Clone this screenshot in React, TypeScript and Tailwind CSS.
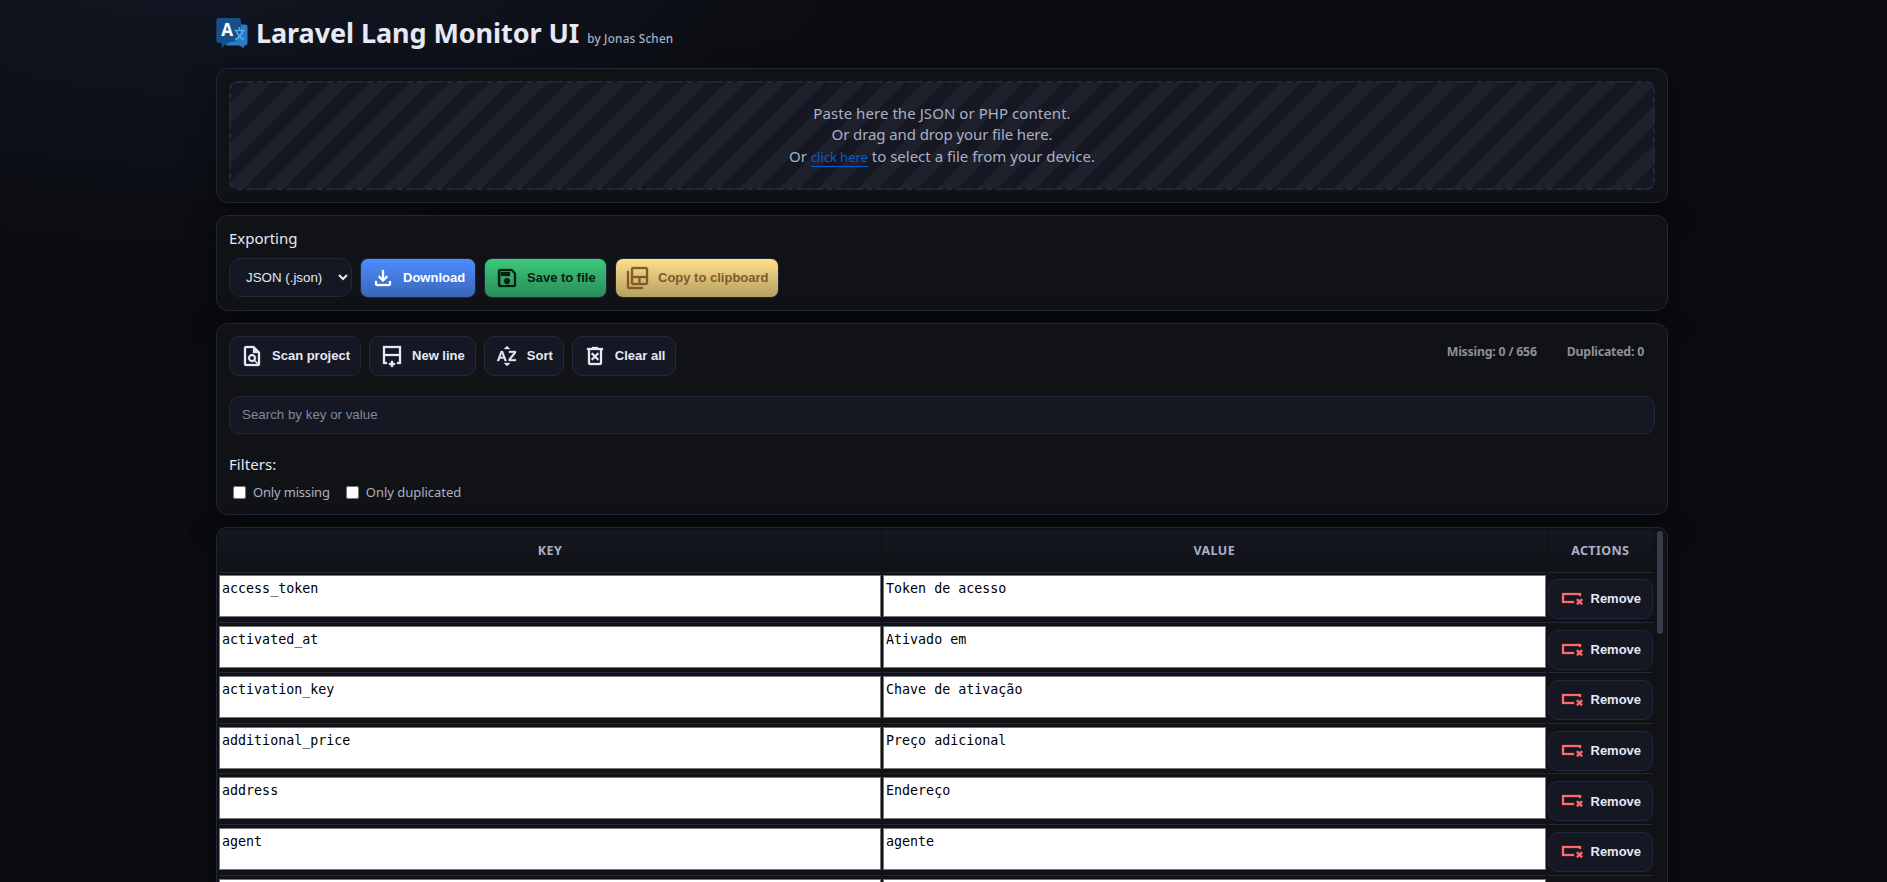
import type { ReactNode } from "react";

const card =
  "rounded-xl border border-[#22273a] bg-[#111216] shadow-[0_10px_30px_rgba(0,0,0,0.35)]";

function Symbol({ d, className = "" }: { d: string; className?: string }) {
  return (
    <svg
      viewBox="0 -960 960 960"
      className={"size-6 shrink-0 fill-current stroke-current stroke-[12] " + className}
    >
      <path d={d} />
    </svg>
  );
}

const icons = {
  download:
    "M480-320 280-520l56-58 104 104v-326h80v326l104-104 56 58-200 200ZM240-160q-33 0-56.500-23.500T160-240v-120h80v120h480v-120h80v120q0 33-23.500 56.500T720-160H240Z",
  save: "M840-680v480q0 33-23.500 56.500T760-120H200q-33 0-56.500-23.500T120-200v-560q0-33 23.500-56.500T200-840h480l160 160Zm-80 34L646-760H200v560h560v-446ZM480-240q50 0 85-35t35-85q0-50-35-85t-85-35q-50 0-85 35t-35 85q0 50 35 85t85 35ZM240-560h360v-160H240v160Zm-40-86v446-560 114Z",
  copy: "M120-40q-33 0-56.500-23.500T40-120v-640h80v640h560v80H120Zm160-160q-33 0-56.500-23.500T200-280v-560q0-33 23.500-56.500T280-920h520q33 0 56.500 23.500T880-840v560q0 33-23.500 56.500T800-200H280Zm0-360h520v-280H280v280Zm300 280h220v-200H580v200Zm-300 0h220v-200H280v200Z",
  scan: "M240-80q-33 0-56.500-23.500T160-160v-640q0-33 23.500-56.500T240-880h320l240 240v480q0 33-23.500 56.500T720-80H240Zm0-80h442L573-269q-21 14-44.500 21.500T480-240q-66 0-113-47t-47-113q0-66 47-113t113-47q66 0 113 47t47 113q0 25-7.500 48.500T611-307l109 109v-402H520v-200H240v640Zm240-160q33 0 56.500-23.500T560-400q0-33-23.500-56.500T480-480q-33 0-56.500 23.500T400-400q0 33 23.500 56.500T480-320Z",
  line: "M200-560h560v-240H200v240Zm-80 400v-720h720v720H680v-80h80v-240H200v240h80v80H120Zm320 120v-80h-80v-80h80v-80h80v80h80v80h-80v80h-80Z",
  sort: "m80-280 150-400h86l150 400h-82l-34-96H196l-32 96H80Zm140-164h104l-48-150h-6l-50 150Zm328 164v-76l202-252H556v-72h282v76L638-352h202v72H548ZM360-760l120-120 120 120H360ZM480-80 360-200h240L480-80Z",
  clear:
    "m376-300 104-104 104 104 56-56-104-104 104-104-56-56-104 104-104-104-56 56 104 104-104 104 56 56Zm-96 180q-33 0-56.500-23.500T200-200v-520h-40v-80h200v-40h240v40h200v80h-40v520q0 33-23.500 56.500T680-120H280Zm400-600H280v520h400v-520Z",
  remove:
    "M120-320v-400h760v120h-80v-40H200v240h400v80H120Zm566 20 64 64 70-70 70 70 64-64-70-70 70-70-64-64-70 70-70-70-64 64 70 70-70 70Z",
};

function ToolButton({ icon, children }: { icon: string; children: ReactNode }) {
  return (
    <button className="flex h-10 items-center gap-2 rounded-[10px] border border-[#22273a] bg-[#151722] px-2.5 font-['Liberation_Sans',sans-serif] text-[13px] font-bold text-[#e6e8f5]">
      <Symbol d={icon} />
      {children}
    </button>
  );
}

function Logo() {
  return (
    <svg viewBox="0 0 32 32" className="size-8 shrink-0">
      <path
        d="M13 6.500H29a2.500 2.500 0 0 1 2.500 2.500V25.500a2 2 0 0 1-2 2H28v3L23.300 27.500H10z"
        fill="#2b7cc7"
      />
      <path
        d="M3.500 0H22a3 3 0 0 1 3 3v9.500L19 23.500Q12 24 10 26L5.700 30V25H3.500A3 3 0 0 1 .3 22V3a3 3 0 0 1 3.200-3z"
        fill="#174f8a"
      />
      <text x="5.200" y="18" fontSize="17" fontWeight="700" fill="#fff" fontFamily="Noto Sans">
        A
      </text>
      <path
        d="M23.500 9v3M18.300 12.500h10.400M20.500 13c1 4 4 7 7.500 8.500M26.700 13c-1 4-4 7-7.500 8.500"
        fill="none"
        stroke="#55a8ec"
        strokeWidth="1.500"
      />
    </svg>
  );
}

const rows = [
  ["access_token", "Token de acesso"],
  ["activated_at", "Ativado em"],
  ["activation_key", "Chave de ativação"],
  ["additional_price", "Preço adicional"],
  ["address", "Endereço"],
  ["agent", "agente"],
  ["", ""],
];

const columns = "grid grid-cols-[662px_662.500px_105.500px] gap-x-[2px]";
const th =
  "flex h-[43px] items-center justify-center border-b border-[#22273a] bg-linear-to-b from-[#151722] to-[#111216] text-[12.500px] font-bold tracking-[0.400px] text-[#aab0c5]";

function Field({ children }: { children: string }) {
  return (
    <div className="h-[48.600px] border-b border-[#22273a] pt-px">
      <div className="h-[42px] border border-[#767676] bg-white px-[2px] pt-[5px] font-['DejaVu_Sans_Mono',monospace] text-[13.333px] leading-[16px] text-black">
        {children}
      </div>
    </div>
  );
}

export default function App() {
  return (
    <div className="h-[882px] overflow-hidden bg-[#0b0c10] bg-[radial-gradient(1200px_600px_at_10%_-10%,rgba(77,141,255,0.09),transparent_60%)] font-['Noto_Sans',sans-serif] text-[#e6e8f5]">
      <div className="ml-[216px] flex w-[1452px] flex-col">
        <header className="flex h-[68px] items-center gap-2">
          <Logo />
          <h1 className="-mt-0.5 text-[27px] font-bold tracking-[-0.080px] whitespace-nowrap">
            Laravel Lang Monitor UI
          </h1>
          <span className="pt-2.5 text-[11.700px] font-medium tracking-[0.230px] text-[#aab0c5]">
            by Jonas Schen
          </span>
        </header>

        <section className={card + " h-[135px] p-3"}>
          <div className="h-[109px] rounded-lg border-2 border-dashed border-[#22293a] bg-[#151722] bg-[repeating-linear-gradient(135deg,transparent_0_14px,rgba(255,255,255,0.040)_14px_28px)] pt-[19.500px] text-center text-[15px] leading-[21.600px] text-[#aab0c5]">
            <p className="tracking-[0.060px]">Paste here the JSON or PHP content.</p>
            <p className="tracking-[-0.100px]">Or drag and drop your file here.</p>
            <p>
              Or{" "}
              <a className="border-b border-[#0d5bd0] text-[13.200px] tracking-[-0.120px] text-[#0d5bd0]">
                click here
              </a>{" "}
              to select a file from your device.
            </p>
          </div>
        </section>

        <section className={card + " mt-3 h-24 px-3 pt-[11px]"}>
          <p className="h-[31px] text-[15px] leading-[22px] tracking-[-0.020px]">Exporting</p>
          <div className="flex items-start font-['Liberation_Sans',sans-serif] text-[13px] font-bold">
            <div className="mr-2 flex h-[39px] w-[123px] items-center justify-between rounded-xl border border-[#22273a] bg-[#151722] pr-[3px] pl-4 text-[13.333px] font-normal">
              JSON (.json)
              <svg viewBox="0 0 10 7" className="h-[7px] w-[10px]">
                <path d="M1 1l4 4 4-4" fill="none" stroke="currentColor" strokeWidth="2" />
              </svg>
            </div>
            <button className="mr-2 flex h-10 w-[116px] items-center gap-2 rounded-lg border border-[#22273a] bg-linear-to-b from-[#4d8dff] to-[#3b66b8] px-2.5 text-white">
              <Symbol d={icons.download} />
              Download
            </button>
            <button className="mr-2 flex h-10 w-[123px] items-center gap-2 rounded-lg border border-[#22273a] bg-linear-to-b from-[#3bc97b] to-[#2a8c58] px-2.5 text-[#04200f]">
              <Symbol d={icons.save} />
              Save to file
            </button>
            <button className="flex h-10 w-[164px] items-center gap-2 rounded-lg border border-[#22273a] bg-linear-to-b from-[#ffe08a] to-[#b5a062] px-2.5 whitespace-nowrap text-[#83592a]">
              <Symbol d={icons.copy} />
              Copy to clipboard
            </button>
          </div>
        </section>

        <section className={card + " mt-3 h-48 px-3 pt-3"}>
          <div className="flex items-start justify-between">
            <div className="flex gap-2">
              <ToolButton icon={icons.scan}>Scan project</ToolButton>
              <ToolButton icon={icons.line}>New line</ToolButton>
              <ToolButton icon={icons.sort}>Sort</ToolButton>
              <ToolButton icon={icons.clear}>Clear all</ToolButton>
            </div>
            <div className="flex gap-[30px] pt-[7px] pr-[11px] text-[12.300px] leading-[18px] font-bold tracking-[-0.210px] text-[#8c8f96]">
              <span>Missing: 0 / 656</span>
              <span>Duplicated: 0</span>
            </div>
          </div>
          <input
            placeholder="Search by key or value"
            className="mt-5 block h-[38px] w-full rounded-[10px] border border-[#22273a] bg-[#151722] px-3 pb-[2px] font-['Liberation_Sans',sans-serif] text-[13.333px] placeholder:text-[#838899]"
          />
          <p className="mt-[19px] text-[15px] leading-[22px] tracking-[0.080px]">Filters:</p>
          <div className="mt-2 flex items-center text-[13px] leading-[18px] text-[#aab0c5]">
            <input type="checkbox" className="mr-[7px] ml-1 size-[13px]" />
            <span className="mr-4 tracking-[-0.180px]">Only missing</span>
            <input type="checkbox" className="mr-[7px] size-[13px]" />
            <span className="tracking-[-0.020px]">Only duplicated</span>
          </div>
        </section>

        <section className="mt-3 flex h-[400px] rounded-t-[10px] border border-[#22273a] bg-[#111216] pt-[2px] pl-[2px] shadow-[0_10px_30px_rgba(0,0,0,0.35)]">
          <div>
            <div className={columns + " mb-px"}>
              <div className={th}>KEY</div>
              <div className={th}>VALUE</div>
              <div className={th}>ACTIONS</div>
            </div>
            {rows.map(([key, value], i) => (
              <div key={i} className={columns + " mb-[2px]"}>
                <Field>{key}</Field>
                <Field>{value}</Field>
                <div className="h-[48.600px] border-b border-[#22273a] pt-[5px]">
                  {key && (
                    <button className="flex h-10 w-full items-center gap-2 rounded-[10px] border border-[#22273a] bg-[#151722] px-2.5 font-['Liberation_Sans',sans-serif] text-[13px] font-bold text-[#e6e8f5]">
                      <Symbol d={icons.remove} className="text-[#ff6b6b]" />
                      Remove
                    </button>
                  )}
                </div>
              </div>
            ))}
          </div>
          <div className="mt-px ml-[4px] h-[103px] w-[6px] rounded-full bg-[#383c48]" />
        </section>
      </div>
    </div>
  );
}
